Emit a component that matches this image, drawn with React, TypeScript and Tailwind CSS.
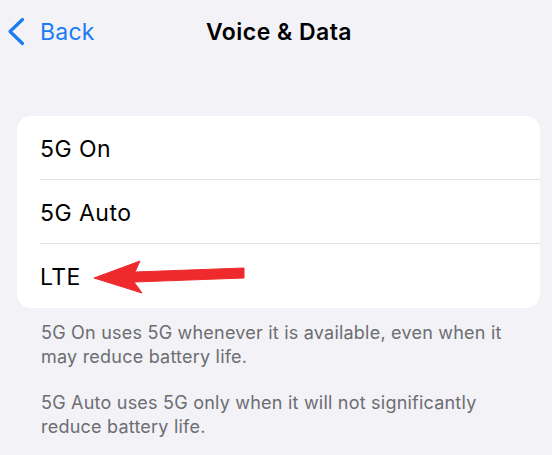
const font = { fontFamily: 'Inter, "Noto Sans", sans-serif' };

function Chevron() {
  return (
    <svg width="18" height="30" viewBox="0 0 18 30" className="shrink-0">
      <polyline
        points="15.5,2.5 3,14.5 15.5,26.5"
        fill="none"
        stroke="#1a7cf5"
        strokeWidth="3.2"
        strokeLinecap="round"
        strokeLinejoin="round"
      />
    </svg>
  );
}

function RedArrow() {
  return (
    <svg
      width="240"
      height="64"
      viewBox="0 0 240 64"
      className="absolute left-0 top-0 pointer-events-none"
    >
      <polygon
        points="77,34 123,17 118,28 227,24 227,34 117,38 125,49"
        fill="#ee2a2c"
        stroke="#ee2a2c"
        strokeWidth="1"
        strokeLinejoin="round"
      />
    </svg>
  );
}

const rows = ['5G On', '5G Auto', 'LTE'];

export default function App() {
  return (
    <div className="w-[552px] h-[455px] bg-[#f2f2f7] overflow-hidden" style={font}>
      <div className="relative flex items-center h-[28px] mt-[18px]">
        <div className="flex items-center gap-[15px] pl-[7px] text-[#1a7cf5] text-[23px] tracking-[0.01em]">
          <Chevron />
          <span className="leading-[28px]">Back</span>
        </div>
        <div className="absolute left-0 right-0 text-center text-[23px] tracking-[0.02em] font-semibold leading-[28px] text-black pl-[6px]">
          Voice &amp; Data
        </div>
      </div>

      <div className="ml-[17px] w-[523px] mt-[70px] bg-white rounded-[14px] overflow-hidden">
        {rows.map((r, i) => (
          <div key={r} className="relative pl-[23px]">
            <div
              className={`h-[64px] flex items-center pt-[3px] text-[23px] tracking-[0.02em] text-black ${
                i < rows.length - 1 ? 'border-b border-[#e2e2e6]' : ''
              }`}
            >
              {r}
            </div>
            {r === 'LTE' && <RedArrow />}
          </div>
        ))}
      </div>

      <div className="pl-[41px] pr-[30px] mt-[13px] text-[18px] tracking-[0.012em] leading-[24px] text-[#6d6d72]">
        <p>5G On uses 5G whenever it is available, even when it may reduce battery life.</p>
        <p className="mt-[22px]">
          5G Auto uses 5G only when it will not significantly reduce battery life.
        </p>
      </div>
    </div>
  );
}
